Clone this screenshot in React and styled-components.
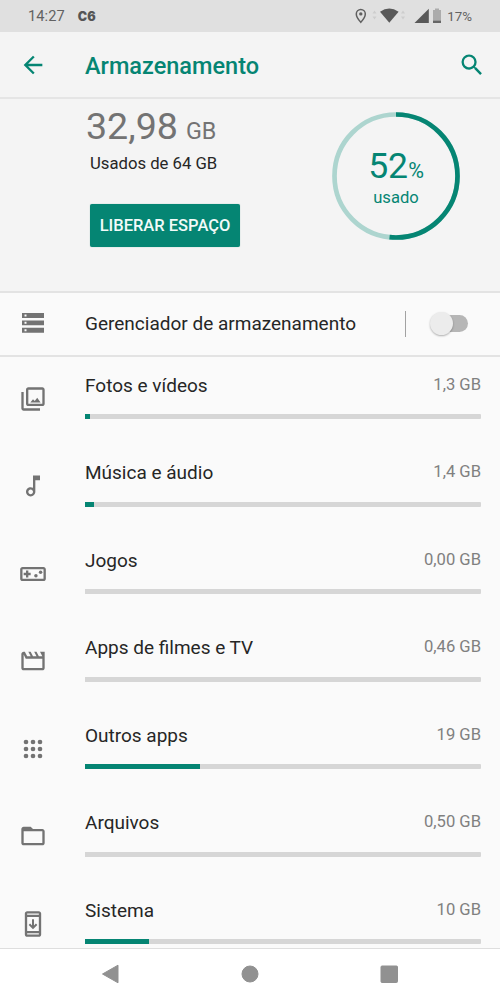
import React from 'react';
import styled, { createGlobalStyle } from 'styled-components';

const GlobalStyle = createGlobalStyle`
  *, *::before, *::after { box-sizing: border-box; }
  body { margin: 0; font-family: Roboto, "Liberation Sans", sans-serif; }
`;

const teal = '#058573';

const Screen = styled.div`
  width: 500px;
  height: 1000px;
  display: flex;
  flex-direction: column;
  overflow: hidden;
  background: #fafafa;
  color: #262626;
  white-space: nowrap;
`;

const StatusBar = styled.div`
  flex: none;
  height: 32px;
  padding: 0 28px;
  display: flex;
  align-items: center;
  background: #e0e0e0;
  color: #626262;
`;

const Clock = styled.span`
  font-size: 14.6px;
  line-height: 32px;
  letter-spacing: 0.1px;
`;

const Carrier = styled.span`
  margin-left: 13px;
  font-family: Inter, sans-serif;
  font-weight: 900;
  font-size: 12.5px;
  color: #555;
`;

const StatusIcons = styled.svg`
  margin-left: auto;
  flex: none;
`;

const Battery = styled.span`
  margin-left: 5px;
  font-size: 13.3px;
`;

const Header = styled.header`
  flex: none;
  height: 67px;
  padding: 0 14px 0 19px;
  display: flex;
  align-items: center;
  background: #f4f4f4;
  border-bottom: 2px solid #e5e5e5;
`;

const Title = styled.h1`
  flex: 1;
  margin: 3px 0 0 38px;
  font-size: 23.5px;
  font-weight: 500;
  color: ${teal};
`;

const Summary = styled.section`
  flex: none;
  height: 194px;
  padding: 5px 39px 0 86px;
  display: flex;
  justify-content: space-between;
  background: #f4f4f4;
  border-bottom: 2px solid #e3e3e3;
`;

const Usage = styled.div`
  display: flex;
  flex-direction: column;
  align-items: flex-start;
`;

const Amount = styled.div`
  height: 46px;
  font-size: 37.6px;
  line-height: 45px;
  color: #737373;
`;

const Unit = styled.span`
  margin-left: 8px;
  font-size: 23.3px;
`;

const Caption = styled.div`
  margin: 3px 0 0 4px;
  font-size: 16.7px;
  line-height: 21px;
`;

const FreeButton = styled.button`
  width: 150px;
  height: 42.5px;
  margin: 30px 0 0 4px;
  padding: 1px 0 0;
  border: 0;
  border-radius: 2px;
  background: ${teal};
  color: #f2fbf9;
  font: 500 16.5px Roboto, sans-serif;
  box-shadow: 0 0 1px rgba(5, 133, 115, 0.5);
`;

const Gauge = styled.div`
  display: grid;
  width: 130px;
  height: 130px;
  margin-top: 7px;
  > * { grid-area: 1 / 1; }
`;

const GaugeText = styled.div`
  display: flex;
  flex-direction: column;
  align-items: center;
  padding-top: 35px;
  color: ${teal};
`;

const Percent = styled.div`
  font-size: 35.6px;
  line-height: 41px;
  small { font-size: 21.5px; }
`;

const Used = styled.div`
  margin-top: -2px;
  font-size: 16.6px;
  line-height: 18px;
`;

const ManagerRow = styled.div`
  flex: none;
  height: 64px;
  padding-right: 32px;
  display: flex;
  align-items: center;
  border-bottom: 2px solid #e3e3e3;
`;

const IconCell = styled.div`
  flex: none;
  width: 85px;
  padding-left: 19px;
  display: flex;
  align-items: center;
  svg { display: block; fill: #737373; }
`;

const StorageIconCell = styled(IconCell)`
  padding-bottom: 3px;
`;

const Label = styled.span`
  flex: 1;
  font-size: 19px;
  line-height: 24px;
`;

const Divider = styled.span`
  width: 1.5px;
  height: 26px;
  margin: 0 24px 1px 0;
  background: #a2a2a2;
`;

const Switch = styled.span`
  display: flex;
  align-items: center;
  width: 38px;
  height: 17px;
  margin-bottom: 2px;
  border-radius: 8.5px;
  background: linear-gradient(90deg, transparent 30%, #b6b6b6 30%);
`;

const Knob = styled.span`
  width: 23px;
  height: 23px;
  border-radius: 50%;
  background: #ececec;
  box-shadow: 0 1px 2px rgba(0, 0, 0, 0.3);
`;

const List = styled.main`
  flex: 1;
  min-height: 0;
  overflow: hidden;
`;

const Row = styled.div`
  display: flex;
  height: 87.5px;
  padding-right: 19px;
`;

const RowIcon = styled(IconCell)`
  height: 83.6px;
`;

const RowBody = styled.div`
  flex: 1;
  padding-top: 16.9px;
`;

const RowLine = styled.div`
  display: flex;
  justify-content: space-between;
  height: 40.2px;
`;

const Size = styled.span`
  font-size: 16.6px;
  line-height: 21px;
  color: #808080;
`;

const Track = styled.div`
  height: 5px;
  border-radius: 0 1px 1px 0;
  background: #d6d6d6;
`;

const Fill = styled.div`
  width: ${(p) => p.$w}px;
  height: 5px;
  background: ${teal};
`;

const NavBar = styled.nav`
  flex: none;
  height: 52px;
  border-top: 1.5px solid #dedede;
  background: #fff;
  svg { display: block; }
`;

const Icon = ({ children }) => (
  <svg width="28" height="28" viewBox="0 0 24 24">{children}</svg>
);

const items = [
  {
    name: 'Fotos e vídeos', size: '1,3 GB', fill: 4.5,
    icon: <path d="M20 4v12H8V4h12m0-2H8c-1.1 0-2 .9-2 2v12c0 1.1.9 2 2 2h12c1.1 0 2-.9 2-2V4c0-1.1-.9-2-2-2zM2 6v14c0 1.1.9 2 2 2h14v-2H4V6H2zM9.700 15l2.300-2.800 1.500 1.500 2.100-2.700 2.900 4z" />,
  },
  {
    name: 'Música e áudio', size: '1,4 GB', fill: 8.5,
    icon: <path d="M12 3v10.55c-.59-.34-1.27-.55-2-.55-2.21 0-4 1.79-4 4s1.79 4 4 4 4-1.79 4-4V7h4V3h-6zm-2 16c-1.1 0-2-.9-2-2s.9-2 2-2 2 .9 2 2-.9 2-2 2z" />,
  },
  {
    name: 'Jogos', size: '0,00 GB', fill: 0,
    icon: (
      <>
        <path d="M21 6H3c-1.1 0-2 .9-2 2v8c0 1.1.9 2 2 2h18c1.1 0 2-.9 2-2V8c0-1.1-.9-2-2-2zm0 10H3V8h18v8zM6 15h2v-2h2v-2H8V9H6v2H4v2h2z" />
        <circle cx="14.5" cy="13.5" r="1.5" />
        <circle cx="18.5" cy="10.5" r="1.5" />
      </>
    ),
  },
  {
    name: 'Apps de filmes e TV', size: '0,46 GB', fill: 0,
    icon: <path d="M4 6.47L5.76 10H20v8H4V6.47M22 4h-4l2 4h-3l-2-4h-2l2 4h-3l-2-4H8l2 4H7L5 4H4c-1.1 0-1.99.9-1.99 2L2 18c0 1.1.9 2 2 2h16c1.1 0 2-.9 2-2V4z" />,
  },
  {
    name: 'Outros apps', size: '19 GB', fill: 115,
    icon: [6, 12, 18].flatMap((y) => [6, 12, 18].map((x) => (
      <circle key={`${x}-${y}`} cx={x} cy={y} r="2" />
    ))),
  },
  {
    name: 'Arquivos', size: '0,50 GB', fill: 0,
    icon: <path d="M20 6h-8l-2-2H4c-1.1 0-1.99.9-1.99 2L2 18c0 1.1.9 2 2 2h16c1.1 0 2-.9 2-2V8c0-1.1-.9-2-2-2zm0 12H4V8h16v10z" />,
  },
  {
    name: 'Sistema', size: '10 GB', fill: 63.5,
    icon: (
      <>
        <path d="M17 1H7c-1.1 0-2 .9-2 2v18c0 1.1.9 2 2 2h10c1.1 0 2-.9 2-2V3c0-1.1-.9-2-2-2zm0 20H7v-1h10v1zm0-3H7V6h10v12zm0-14H7V3h10v1z" />
        <path d="M12 8v7M8.9 12.2l3.1 3.1 3.1-3.1" fill="none" stroke="#737373" strokeWidth="1.7" />
      </>
    ),
  },
];

export default function App() {
  return (
    <>
      <GlobalStyle />
      <Screen>
        <StatusBar>
          <Clock>14:27</Clock>
          <Carrier>C6</Carrier>
          <StatusIcons width="88" height="32" viewBox="354 0 88 32">
            <path d="M360.800 9.500a4.500 4.500 0 0 0-4.500 4.500c0 3.400 4.500 8.300 4.500 8.300s4.500-4.900 4.500-8.300a4.500 4.500 0 0 0-4.500-4.500z" fill="none" stroke="#606060" strokeWidth="1.500" />
            <circle cx="360.800" cy="13.900" r="1.700" fill="#606060" />
            <path d="M372.500 13.500l2-3 2 3zM372.500 16.500l2 3 2-3zM401 13.500l2-3 2 3zM401 16.500l2 3 2-3z" fill="#cdcdcd" />
            <path d="M380 11.800q9.300-6.700 18.600 0L389.300 22.800z" fill="#595959" />
            <path d="M428.800 8.700V23H414.500z" fill="#595959" />
            <path d="M435 8.500h4v1.500h2V20.500h-8V10h2z" fill="#acacac" />
            <path d="M433 20.500h8V23h-8z" fill="#666" />
          </StatusIcons>
          <Battery>17%</Battery>
        </StatusBar>

        <Header>
          <svg width="28" height="28" viewBox="0 0 24 24" fill={teal}>
            <path d="M20 11H7.830l5.590-5.590L12 4l-8 8 8 8 1.410-1.410L7.830 13H20v-2z" />
          </svg>
          <Title>Armazenamento</Title>
          <svg width="28" height="28" viewBox="0 0 24 24" fill={teal}>
            <path d="M15.500 14h-.79l-.28-.27A6.471 6.471 0 0 0 16 9.500 6.500 6.500 0 1 0 9.500 16c1.610 0 3.090-.59 4.230-1.570l.27.28v.79l5 4.990L20.490 19l-4.990-5zm-6 0C7.010 14 5 11.990 5 9.500S7.010 5 9.500 5 14 7.010 14 9.500 11.990 14 9.500 14z" />
          </svg>
        </Header>

        <Summary>
          <Usage>
            <Amount>32,98<Unit>GB</Unit></Amount>
            <Caption>Usados de 64 GB</Caption>
            <FreeButton>LIBERAR ESPAÇO</FreeButton>
          </Usage>
          <Gauge>
            <svg width="130" height="130" viewBox="0 0 130 130" fill="none" strokeWidth="4.700">
              <circle cx="65" cy="65" r="61.500" stroke="#add5cf" />
              <circle cx="65" cy="65" r="61.500" stroke={teal} pathLength="100" strokeDasharray="51.700 48.300" transform="rotate(-90 65 65)" />
            </svg>
            <GaugeText>
              <Percent>52<small>%</small></Percent>
              <Used>usado</Used>
            </GaugeText>
          </Gauge>
        </Summary>

        <ManagerRow>
          <StorageIconCell>
            <svg width="28" height="28" viewBox="0 0 28 28">
              <path fillRule="evenodd" d="M3 4h22v5H3zM5.500 5.500v2h2v-2zM3 11.500h22v4.700H3zM5.500 12.800v2h2v-2zM3 18.700h22v5H3zM5.500 20.200v2h2v-2z" />
            </svg>
          </StorageIconCell>
          <Label>Gerenciador de armazenamento</Label>
          <Divider />
          <Switch><Knob /></Switch>
        </ManagerRow>

        <List>
          {items.map((item) => (
            <Row key={item.name}>
              <RowIcon><Icon>{item.icon}</Icon></RowIcon>
              <RowBody>
                <RowLine>
                  <Label>{item.name}</Label>
                  <Size>{item.size}</Size>
                </RowLine>
                <Track><Fill $w={item.fill} /></Track>
              </RowBody>
            </Row>
          ))}
        </List>

        <NavBar>
          <svg width="500" height="50" viewBox="0 949 500 50" fill="#919191" stroke="#919191" strokeLinejoin="round">
            <path d="M102.500 974l15.500-8.800v17.600z" />
            <circle cx="250" cy="974" r="8" />
            <rect x="381" y="966" width="16.500" height="16.500" rx="1" />
          </svg>
        </NavBar>
      </Screen>
    </>
  );
}
